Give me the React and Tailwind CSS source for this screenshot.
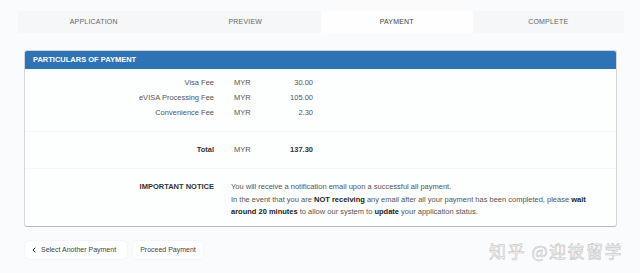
import { ChevronLeft } from "lucide-react";

const TABS = ["APPLICATION", "PREVIEW", "PAYMENT", "COMPLETE"];

const FEES = [
  { label: "Visa Fee", amount: "30.00" },
  { label: "eVISA Processing Fee", amount: "105.00" },
  { label: "Convenience Fee", amount: "2.30" },
];

const FeeRow = ({ label, amount, bold }) => (
  <div className="flex h-[15px] items-center">
    <div className={`w-[189px] text-right ${bold ? "font-bold text-[#333]" : "text-[#555]"}`}>{label}</div>
    <div className="ml-[20px] w-[40px] text-[#555]">MYR</div>
    <div className={`w-[39px] text-right ${bold ? "font-bold text-[#333]" : "text-[#555]"}`}>{amount}</div>
  </div>
);

export default function App() {
  return (
    <div className="h-[273px] w-[640px] overflow-hidden bg-[#fafbfc] pt-[11px] font-['Liberation_Sans',Arial,sans-serif] text-[7.5px]">
      {/* step tabs */}
      <div className="ml-[18px] flex h-[22px] w-[606px] bg-[#f5f7f9] text-[7px]">
        {TABS.map((tab) => (
          <div
            key={tab}
            className={`flex flex-1 items-center justify-center tracking-[0.2px] ${
              tab === "PAYMENT" ? "bg-[#fefefe] text-[#444]" : "text-[#666]"
            }`}
          >
            {tab}
          </div>
        ))}
      </div>

      {/* payment panel */}
      <div className="ml-[24px] mt-[17px] w-[593px] overflow-hidden rounded-[3px] border border-[#d2d5d9] border-b-[#b8bbbf] bg-[#fdfefe]">
        <div className="flex h-[18px] items-center bg-[#2e73b6] pl-[8px] font-bold text-white">
          PARTICULARS OF PAYMENT
        </div>
        <div className="pt-[6px]">
          {FEES.map((fee) => (
            <FeeRow key={fee.label} label={fee.label} amount={fee.amount} />
          ))}
          <div className="mt-[11px] border-t border-[#f6f7f8] pt-[10px]">
            <FeeRow label="Total" amount="137.30" bold />
          </div>
          <div className="mt-[11px] flex border-t border-[#f6f7f8] pb-[7px] pt-[12px] leading-[12.5px]">
            <div className="w-[189px] text-right font-bold text-[#333]">IMPORTANT NOTICE</div>
            <div className="ml-[17px] text-[#555]">
              <div>You will receive a notification email upon a successful all payment.</div>
              <div>
                In the event that you are <b className="text-[#222]">NOT receiving</b> any email after all your payment
                has been completed, please <b className="text-[#222]">wait</b>
              </div>
              <div>
                <b className="text-[#222]">around 20 minutes</b> to allow our system to{" "}
                <b className="text-[#222]">update</b> your application status.
              </div>
            </div>
          </div>
        </div>
      </div>

      {/* actions + watermark */}
      <div className="ml-[25px] mt-[11px] flex items-center">
        <button className="flex h-[18px] w-[102px] items-center gap-[3px] rounded-[4px] bg-[#fdfeff] pl-[5px] text-[7px] text-[#444] shadow-[0_0_2px_rgba(0,0,0,0.08)]">
          <ChevronLeft size={8} strokeWidth={3} className="text-[#222]" />
          Select Another Payment
        </button>
        <button className="ml-[6px] flex h-[18px] w-[70px] items-center justify-center rounded-[4px] bg-[#fdfeff] text-[7px] text-[#444] shadow-[0_0_2px_rgba(0,0,0,0.08)]">
          Proceed Payment
        </button>
        <div className="ml-auto mr-[17px] font-['Noto_Sans_CJK_SC',sans-serif] text-[17px] tracking-[1.5px] text-[#fafafa] [-webkit-text-stroke:0.5px_#bdbdbd]">
          知乎 @迎彼留学
        </div>
      </div>
    </div>
  );
}
